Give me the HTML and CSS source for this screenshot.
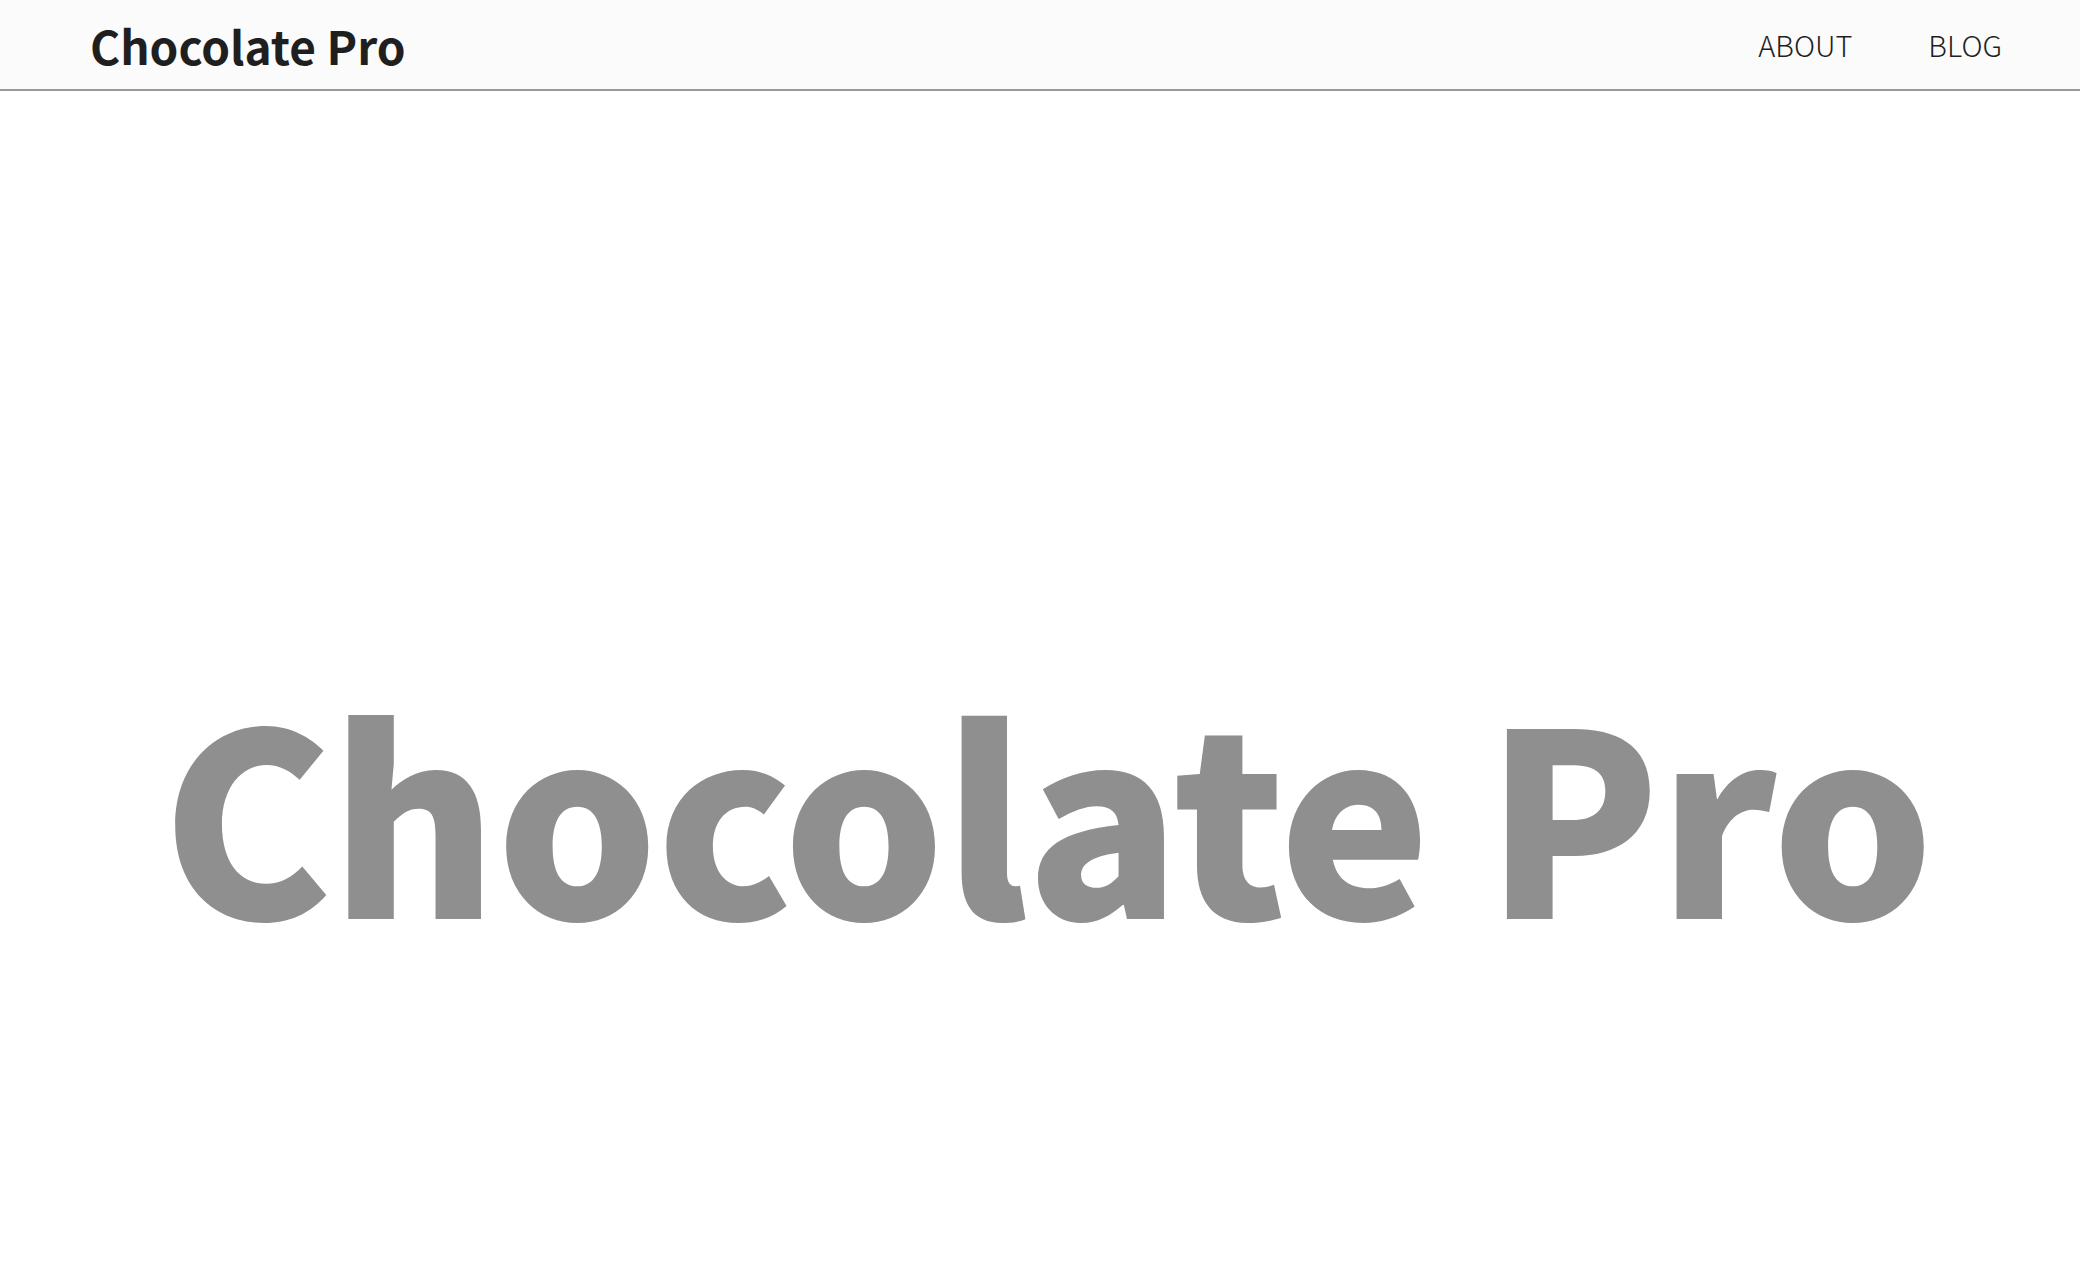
FILE: index.html
```html
<!DOCTYPE html>
<html lang="en">
<head>
<meta charset="utf-8">
<title>Chocolate Pro</title>
<link rel="stylesheet" href="styles.css">
</head>
<body>
<header class="site-header">
  <a class="brand" href="#">Chocolate Pro</a>
  <nav class="nav">
    <a class="nav-link" href="#">ABOUT</a>
    <a class="nav-link" href="#">BLOG</a>
  </nav>
</header>
<main class="hero">
  <h1 class="hero-title">Chocolate Pro</h1>
</main>
</body>
</html>
```
FILE: styles.css
```css
* { box-sizing: border-box; }
html, body { margin: 0; padding: 0; }
body {
  background: #ffffff;
  font-family: "Noto Sans CJK SC", "Source Sans Pro", "Noto Sans", sans-serif;
  color: #1f1f1f;
}
.site-header {
  height: 91px;
  background: #fbfbfb;
  border-bottom: 2px solid #999999;
  display: flex;
  align-items: center;
  justify-content: space-between;
  padding: 0 78px 0 90px;
}
.brand {
  font-size: 46px;
  font-weight: 700;
  color: #1f1f1f;
  text-decoration: none;
  line-height: 1;
}
.nav {
  display: flex;
  gap: 76px;
}
.nav-link {
  font-size: 29px;
  font-weight: 300;
  color: #1f1f1f;
  text-decoration: none;
  line-height: 1;
}
.hero {
  display: flex;
  justify-content: center;
  padding-top: 589px;
  padding-left: 14px;
}
.hero-title {
  margin: 0;
  font-size: 255px;
  font-weight: 900;
  line-height: 1;
  letter-spacing: -2px;
  color: #8f8f8f;
}
```
